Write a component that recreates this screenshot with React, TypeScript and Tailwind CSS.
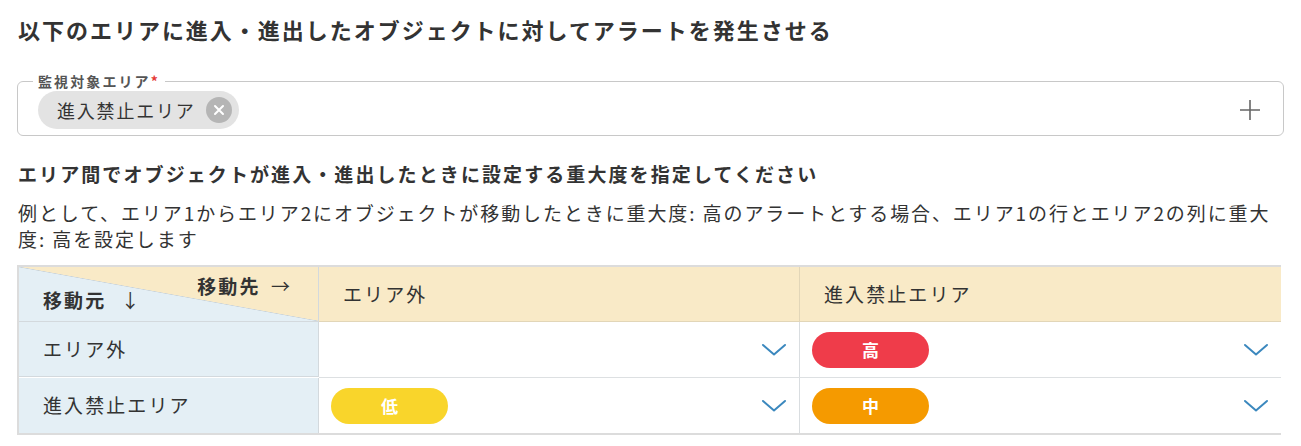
import React from "react";

const FONT = { fontFamily: '"Noto Sans CJK JP", "Noto Sans", sans-serif' };

function Chevron() {
  return (
    <svg width="26" height="14" viewBox="0 0 26 14" fill="none">
      <path d="M2 2 L13 11.5 L24 2" stroke="#3b88be" strokeWidth="2" strokeLinecap="round" strokeLinejoin="round" />
    </svg>
  );
}

function Badge({ label, color }: { label: string; color: string }) {
  return (
    <div className={`flex h-[36px] w-[117px] items-center justify-center rounded-full text-[17px] font-bold tracking-normal text-white ${color}`}>
      {label}
    </div>
  );
}

function Cell({ badge, last }: { badge?: React.ReactNode; last?: boolean }) {
  return (
    <div className={`flex h-[55px] items-center justify-between bg-white pl-[12px] pr-[12px] ${last ? "" : "border-r border-[#d9dde0]"}`}>
      <div>{badge}</div>
      <Chevron />
    </div>
  );
}

export default function App() {
  return (
    <div style={FONT} className="w-[1301px] px-[17px] pt-[12px] text-[#333]">
      <h1 className="pl-[1px] text-[22px] font-bold leading-[34px] tracking-[0.09em]">
        以下のエリアに進入・進出したオブジェクトに対してアラートを発生させる
      </h1>

      <fieldset className="mt-[27px] h-[63px] rounded-[6px] border border-[#c8c8c8] px-[15px]">
        <legend className="px-[5px] text-[14px] font-bold leading-[16px] tracking-[0.15em] text-[#555]">
          監視対象エリア<span className="text-[#e53935]">*</span>
        </legend>
        <div className="flex h-[46px] items-start justify-between pt-[2px]">
          <div className="ml-[5px] flex h-[38px] items-center rounded-full bg-[#e3e3e3] pl-[19px] pr-[7px]">
            <span className="text-[18px] leading-none tracking-[0.1em]">進入禁止エリア</span>
            <span className="ml-[10px] flex h-[26px] w-[26px] items-center justify-center rounded-full bg-[#b5b5b5]">
              <svg width="12" height="12" viewBox="0 0 12 12">
                <path d="M2 2 L10 10 M10 2 L2 10" stroke="#fff" strokeWidth="2" strokeLinecap="round" />
              </svg>
            </span>
          </div>
          <svg className="mr-[7px] mt-[8px]" width="22" height="22" viewBox="0 0 22 22">
            <path d="M11 1 V21 M1 11 H21" stroke="#666" strokeWidth="1.6" />
          </svg>
        </div>
      </fieldset>

      <h2 className="mt-[24px] pl-[1px] text-[19px] font-bold leading-[28px] tracking-[0.11em]">
        エリア間でオブジェクトが進入・進出したときに設定する重大度を指定してください
      </h2>
      <p className="mt-[12px] pl-[1px] text-[19px] leading-[26px] tracking-[0.1em]">
        例として、エリア1からエリア2にオブジェクトが移動したときに重大度: 高のアラートとする場合、エリア1の行とエリア2の列に重大度: 高を設定します
      </p>

      <div className="mt-[13px] grid w-[1264px] grid-cols-[300px_481px_481px] border-2 border-[#dcdcdc] text-[19px] tracking-[0.11em]">
        <div className="relative h-[55px] border-b border-r border-[#d3d9dd] bg-[linear-gradient(to_top_right,#e4eff5_calc(50%-0.6px),#c9d3da_50%,#f9eac7_calc(50%+0.6px))]">
          <span className="absolute right-[26px] top-[5px] font-bold">移動先 <span className="ml-[4px] font-normal">→</span></span>
          <span className="absolute left-[24px] top-[19px] font-bold">移動元 <span className="ml-[8px] font-normal">↓</span></span>
        </div>
        <div className="flex h-[55px] items-center border-b border-r border-[#e2d6b8] bg-[#f9eac7] pl-[24px]">エリア外</div>
        <div className="flex h-[55px] items-center border-b border-[#e2d6b8] bg-[#f9eac7] pl-[24px]">進入禁止エリア</div>

        <div className="flex h-[55px] items-center border-b border-r border-[#d3d9dd] bg-[#e4eff5] pl-[24px]">エリア外</div>
        <div className="border-b border-[#dde0e2]"><Cell /></div>
        <div className="border-b border-[#dde0e2]"><Cell badge={<Badge label="高" color="bg-[#ef3c4a]" />} last /></div>

        <div className="flex h-[55px] items-center border-r border-[#d3d9dd] bg-[#e4eff5] pl-[24px]">進入禁止エリア</div>
        <Cell badge={<Badge label="低" color="bg-[#f9d52b]" />} />
        <Cell badge={<Badge label="中" color="bg-[#f59a00]" />} last />
      </div>
    </div>
  );
}
